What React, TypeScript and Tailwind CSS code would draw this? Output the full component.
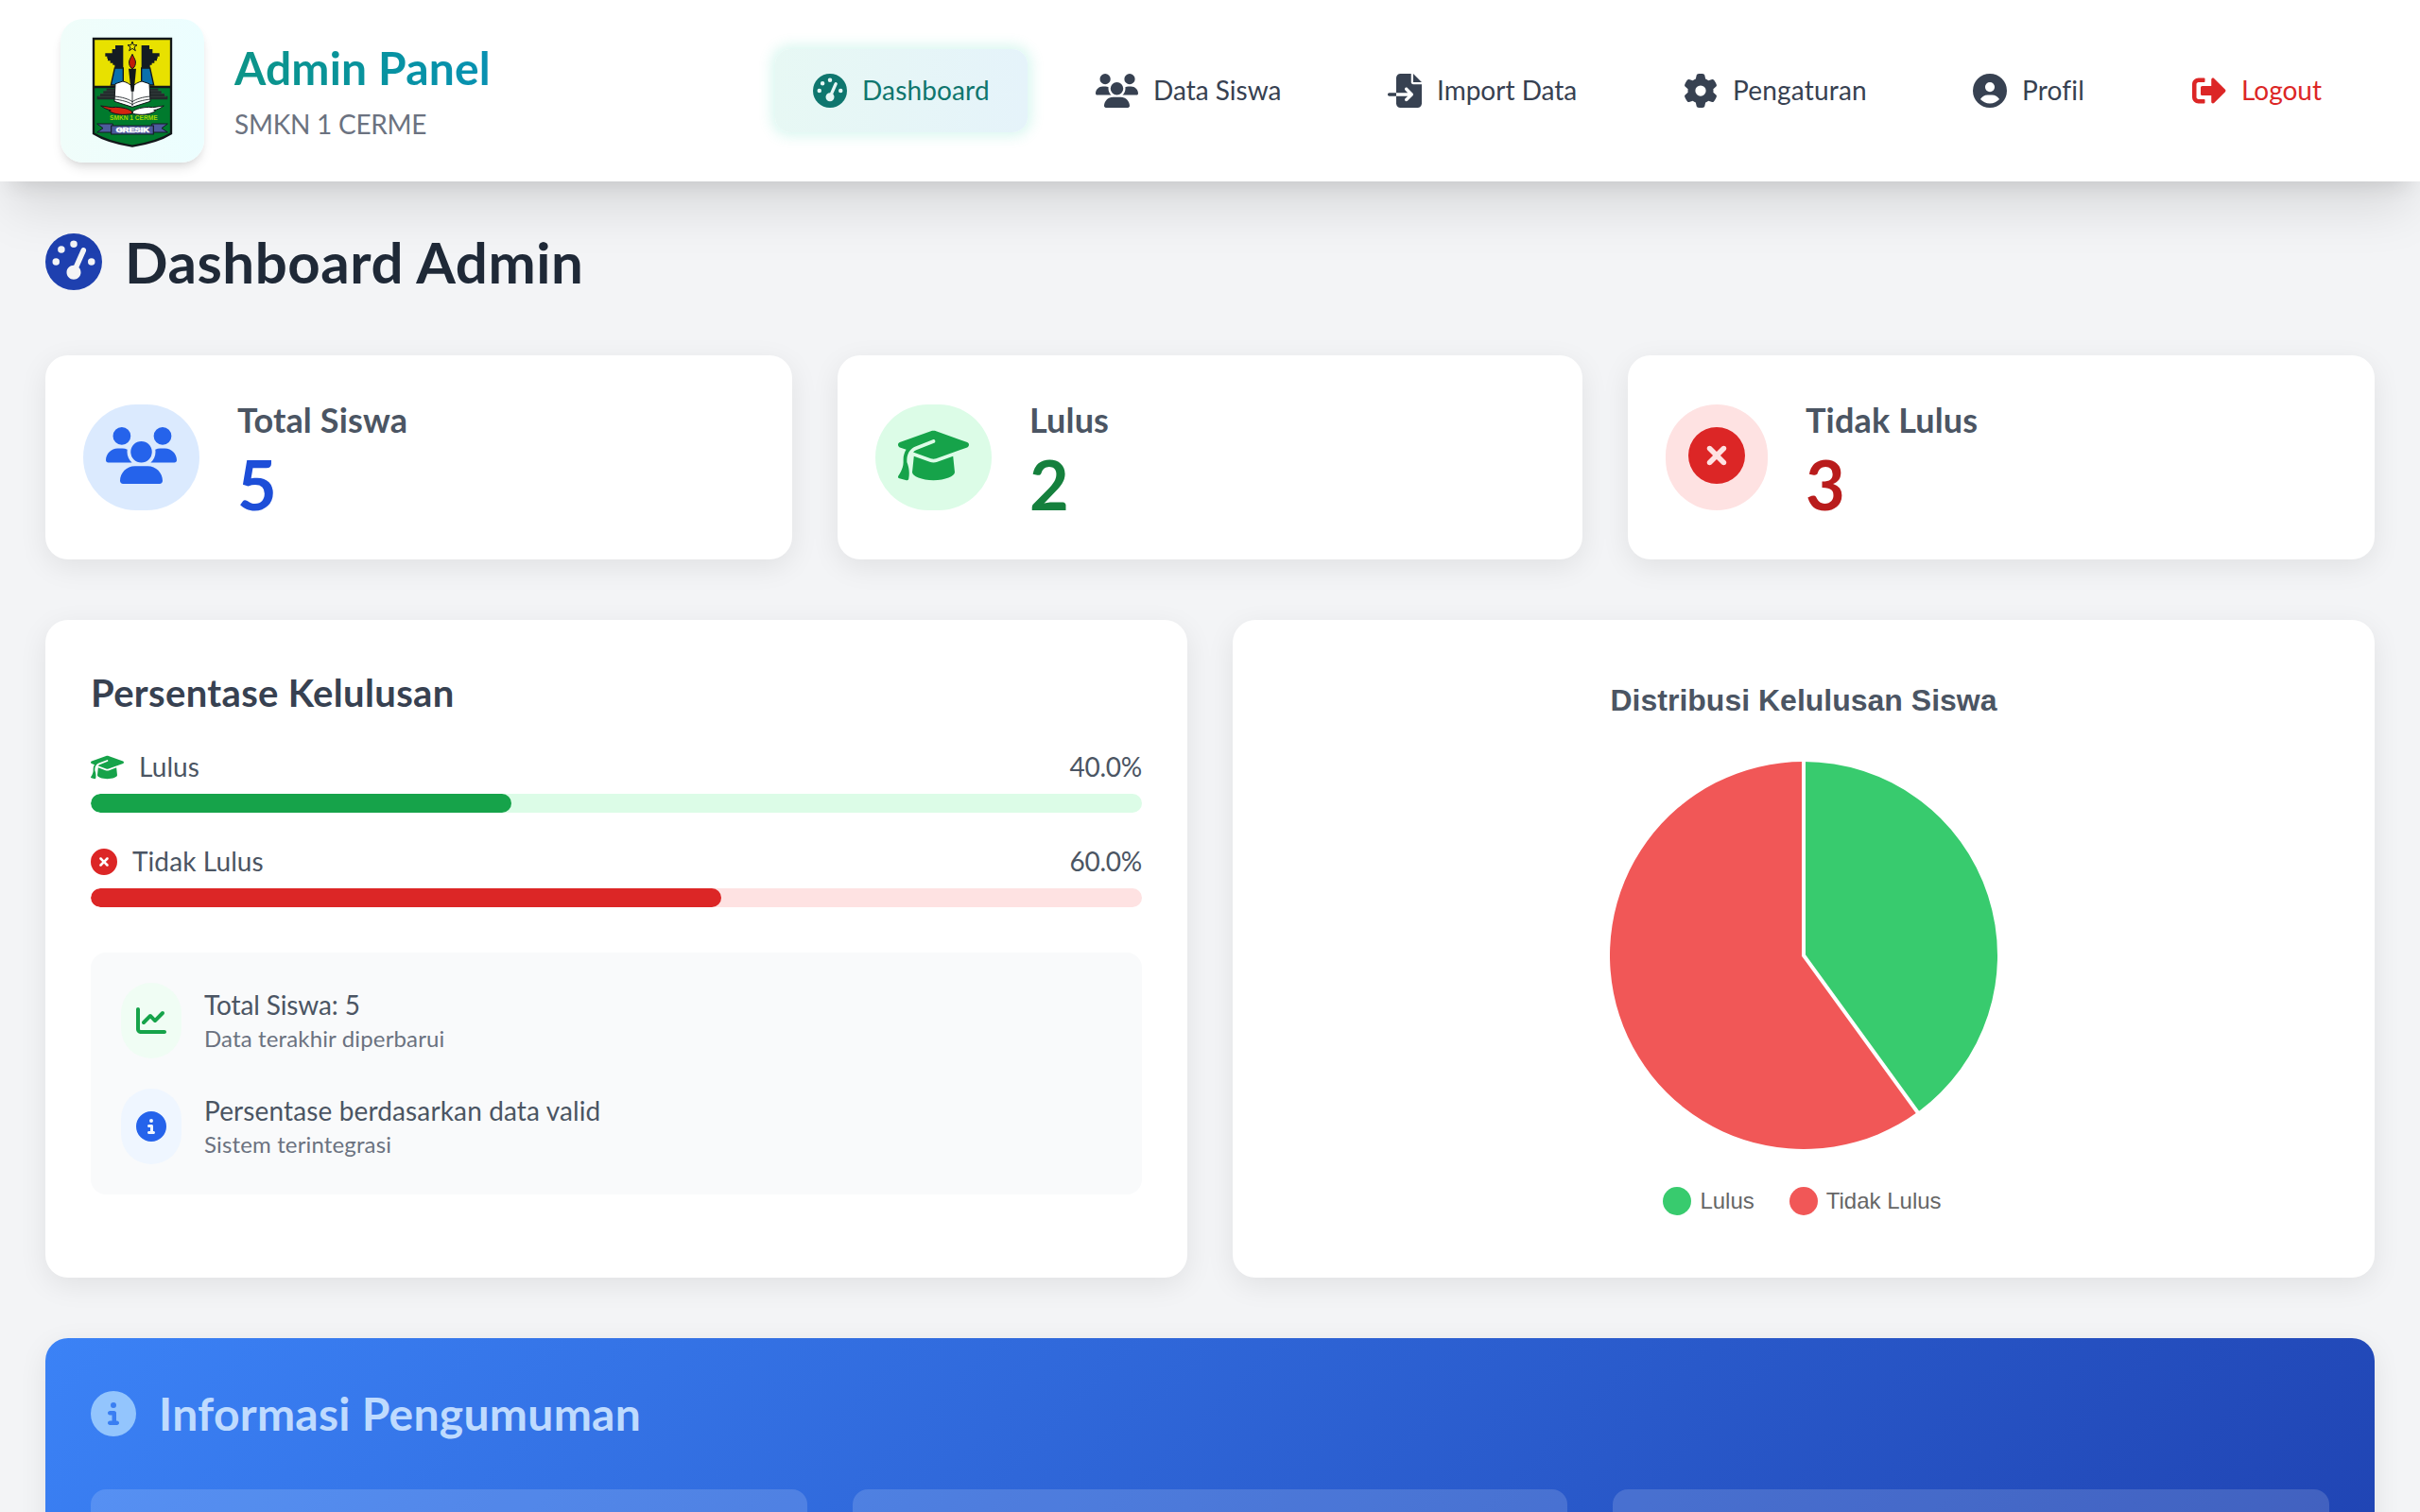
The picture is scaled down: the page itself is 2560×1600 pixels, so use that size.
import type { ReactNode } from "react";
import {
  FaChartLine,
  FaCircleInfo,
  FaCircleUser,
  FaCircleXmark,
  FaFileImport,
  FaGaugeHigh,
  FaGear,
  FaGraduationCap,
  FaUsers,
} from "react-icons/fa6";
import { FaSignOutAlt } from "react-icons/fa";

const CARD = "rounded-3xl bg-white shadow-[0_8px_30px_rgba(0,0,0,0.08)]";

const towerCap =
  "M96 54H121V126H94V116H88V110H80V103H72V96H70V89H64V79H86V66H96Z";

function Emblem() {
  return (
    <svg viewBox="-30 18 360 360" className="size-[120px]">
      <path d="M27 33H273V334C245 352 200 366 150 374C100 366 55 352 27 334Z" fill="#007a2d" />
      <path d="M27 33H273V186H27Z" fill="#e8e100" />
      <path d="M27 186H273" stroke="#12171a" strokeWidth="8" />
      {[undefined, "matrix(-1 0 0 1 300 0)"].map((flip) => (
        <g key={flip ?? "left"} transform={flip}>
          <path d="M94 126H121V180H82Z" fill="#0a70ad" stroke="#12171a" strokeWidth="4" />
          <path d={towerCap} fill="#141c22" />
          <path d="M38 226V215H48V207H58V199H68V191H108L96 226Z" fill="#222a2b" />
          <path d="M48 207H100M58 198H104M42 217H98" stroke="#4a5250" strokeWidth="1.500" />
          <path d="M38 303H88V330H38L57 317Z" fill="#4c5b9c" stroke="#151a26" strokeWidth="3" />
        </g>
      ))}
      <path d="M150 42L154 53L165 53L156 60L160 71L150 64L140 71L144 60L135 53L146 53Z" fill="#e8e100" stroke="#12171a" strokeWidth="3" />
      <path d="M120 168C132 171 143 177 150 186C157 177 168 171 180 168L204 176L207 232L150 250L93 232L96 176Z" fill="#fff" stroke="#12171a" strokeWidth="3" />
      <path d="M94 216C116 218 138 224 150 233C162 224 184 218 206 216M94 225C116 228 138 233 150 242C162 233 184 228 206 225M150 186V246" fill="none" stroke="#12171a" strokeWidth="2.500" />
      <path d="M150 82C156 96 162 101 160 113C158 122 154 126 150 128C146 126 142 122 140 113C138 101 144 96 150 82Z" fill="#c01a08" stroke="#12171a" strokeWidth="3" />
      <path d="M138 128H162L155 200H146Z" fill="#12171a" />
      <path d="M50 246C68 247 80 253 98 250C118 251 138 255 149 264V271C122 277 92 274 76 262L82 260C70 258 60 253 50 246Z" fill="#d42410" stroke="#12171a" strokeWidth="3" />
      <path d="M250 246C232 247 220 253 202 250C182 251 162 255 151 264V271C178 277 208 274 224 262L218 260C230 258 240 253 250 246Z" fill="#fff" stroke="#12171a" strokeWidth="3" />
      <path d="M83 309H217V336H83Z" fill="#4c5b9c" stroke="#151a26" strokeWidth="3.500" />
      <text x="154" y="292" textAnchor="middle" textLength="152" lengthAdjust="spacingAndGlyphs" fontFamily="Liberation Sans" fontSize="19" fontWeight="700" fill="#a4d800">
        SMKN 1 CERME
      </text>
      <text x="151" y="329" textAnchor="middle" textLength="106" lengthAdjust="spacingAndGlyphs" fontFamily="Liberation Sans" fontSize="19" fontWeight="700" fill="#fff" stroke="#fff" strokeWidth="1.500">
        GRESIK
      </text>
      <path d="M27 33H273V334C245 352 200 366 150 374C100 366 55 352 27 334Z" fill="none" stroke="#12171a" strokeWidth="7" />
    </svg>
  );
}

const nav = [
  {
    label: "Dashboard",
    icon: <FaGaugeHigh className="size-9" />,
    tone: "bg-linear-to-r from-[#e7f8f4] to-[#e5f3fa] text-[#0f766e] shadow-[0_0_14px_4px_rgba(45,212,170,0.18)]",
    text: "w-[135px] tracking-[0.15px]",
  },
  { label: "Data Siswa", icon: <FaUsers className="h-9 w-[45px]" />, tone: "text-[#374151]", text: "w-[136px]" },
  { label: "Import Data", icon: <FaFileImport className="size-9" />, tone: "text-[#374151]", text: "w-[149px]" },
  { label: "Pengaturan", icon: <FaGear className="size-9" />, tone: "text-[#374151]", text: "w-[142px] tracking-[0.2px]" },
  { label: "Profil", icon: <FaCircleUser className="size-9" />, tone: "text-[#374151]", text: "w-[68px] tracking-[0.2px]" },
  { label: "Logout", icon: <FaSignOutAlt className="size-9" />, tone: "text-[#dc2626]", text: "w-[85px]" },
];

function Header() {
  return (
    <header className="relative z-10 flex h-48 items-center justify-between bg-white px-16 shadow-[0_40px_50px_-10px_rgba(0,0,0,0.1),0_16px_20px_-12px_rgba(0,0,0,0.1)]">
      <div className="flex items-center gap-8">
        <div className="rounded-3xl bg-linear-to-r from-[#f0fdfa] to-[#ecfeff] p-4 shadow-[0_8px_12px_-2px_rgba(0,0,0,0.1),0_4px_8px_-4px_rgba(0,0,0,0.1)]">
          <Emblem />
        </div>
        <div>
          <h1 className="mb-2 bg-linear-to-r from-[#0d9488] to-[#0891b2] bg-clip-text text-5xl leading-16 font-bold tracking-[0.15px] text-transparent">
            Admin Panel
          </h1>
          <p className="-translate-y-px text-[28px] leading-10 tracking-[-0.25px] text-[#6b7280]">SMKN 1 CERME</p>
        </div>
      </div>
      <nav className="flex gap-8">
        {nav.map(({ label, icon, tone, text }) => (
          <a key={label} className={`flex items-center gap-4 rounded-2xl px-10 py-6 text-[28px] leading-10 whitespace-nowrap ${tone}`}>
            {icon}
            <span className={`-translate-y-px ${text}`}>{label}</span>
          </a>
        ))}
      </nav>
    </header>
  );
}

type StatProps = { label: string; value: number; icon: ReactNode; badge: string; number: string };

function Stat({ label, value, icon, badge, number }: StatProps) {
  return (
    <div className={`flex items-center gap-10 p-10 ${CARD}`}>
      <div className={`flex h-28 items-center rounded-full px-6 pb-[5px] ${badge}`}>{icon}</div>
      <div>
        <h3 className="text-4xl leading-14 font-bold tracking-[0.15px] text-[#4b5563]">{label}</h3>
        <p className={`text-7xl leading-20 font-bold ${number}`}>{value}</p>
      </div>
    </div>
  );
}

type RateProps = { label: string; percent: number; icon: ReactNode; track: string; fill: string };

function Rate({ label, percent, icon, track, fill }: RateProps) {
  return (
    <div>
      <div className="mb-2 flex items-center justify-between text-[28px] leading-10 text-[#4b5563]">
        <div className="flex items-center gap-4">
          {icon}
          <span className="-translate-y-px tracking-[0.1px]">{label}</span>
        </div>
        <span className="-translate-y-px tracking-[-0.25px]">{percent.toFixed(1)}%</span>
      </div>
      <div className={`h-5 overflow-hidden rounded-full ${track}`}>
        <div className={`h-full rounded-full ${fill}`} style={{ width: `${percent}%` }} />
      </div>
    </div>
  );
}

type NoteProps = { icon: ReactNode; badge: string; title: ReactNode; detail: string };

function Note({ icon, badge, title, detail }: NoteProps) {
  return (
    <div className="flex items-center gap-6">
      <div className={`flex h-20 w-16 items-center justify-center rounded-full ${badge}`}>{icon}</div>
      <div className="-translate-y-px">
        <p className="text-[28px] leading-10 text-[#4b5563]">{title}</p>
        <p className="text-2xl leading-8 tracking-[0.14px] text-[#6b7280]">{detail}</p>
      </div>
    </div>
  );
}

function Chart() {
  return (
    <div className={`flex flex-col items-center pt-[65px] font-['Liberation_Sans',Arial,sans-serif] ${CARD}`}>
      <h2 className="text-[32px] leading-10 font-bold text-[#4b5563]">Distribusi Kelulusan Siswa</h2>
      <svg viewBox="-206 -206 412 412" className="mt-11 size-[412px]">
        <path d="M0 0V-205A205 205 0 0 1 120.500 165.850Z" fill="#38cb6e" />
        <path d="M0 0L120.500 165.850A205 205 0 1 1 0 -205Z" fill="#f15757" />
        <path d="M0 -206V0L121.100 166.700" fill="none" stroke="#fff" strokeWidth="4" />
      </svg>
      <div className="mt-[34px] flex items-center gap-[37px] pr-[3px] text-2xl leading-10 text-[#666666]">
        <span className="flex items-center gap-[9px]">
          <i className="size-[30px] rounded-full bg-[#38cb6e]" />
          Lulus
        </span>
        <span className="flex items-center gap-[9px]">
          <i className="size-[30px] rounded-full bg-[#f15757]" />
          Tidak Lulus
        </span>
      </div>
    </div>
  );
}

export default function App() {
  return (
    <div className="h-[1600px] overflow-hidden bg-[#f3f4f6] font-['Lato',sans-serif]">
      <Header />
      <main className="p-12">
        <div className="mb-16 flex items-center gap-6">
          <FaGaugeHigh className="mt-0.5 size-15 text-[#1e40af]" />
          <h1 className="translate-y-px text-6xl leading-18 font-bold tracking-[0.55px] text-[#1f2937]">Dashboard Admin</h1>
        </div>

        <section className="mb-16 grid grid-cols-[790px_788px_790px] gap-12">
          <Stat label="Total Siswa" value={5} icon={<FaUsers className="h-15 w-[75px] text-[#2563eb]" />} badge="bg-[#dbeafe]" number="text-[#1d4ed8]" />
          <Stat label="Lulus" value={2} icon={<FaGraduationCap className="h-15 w-[75px] text-[#16a34a]" />} badge="bg-[#dcfce7]" number="text-[#15803d]" />
          <Stat label="Tidak Lulus" value={3} icon={<FaCircleXmark className="size-15 text-[#dc2626]" />} badge="bg-[#fee2e2]" number="text-[#b91c1c]" />
        </section>

        <section className="mb-16 grid h-[696px] grid-cols-2 gap-12">
          <div className={`p-12 ${CARD}`}>
            <h2 className="mb-8 translate-y-px text-[40px] leading-14 font-bold tracking-[0.34px] text-[#374151]">Persentase Kelulusan</h2>
            <div className="mb-12 flex flex-col gap-8">
              <Rate label="Lulus" percent={40} icon={<FaGraduationCap className="h-7 w-[35px] text-[#16a34a]" />} track="bg-[#dcfce7]" fill="bg-[#16a34a]" />
              <Rate label="Tidak Lulus" percent={60} icon={<FaCircleXmark className="size-7 text-[#dc2626]" />} track="bg-[#fee2e2]" fill="bg-[#dc2626]" />
            </div>
            <div className="flex flex-col gap-8 rounded-2xl bg-[#f9fafb] p-8">
              <Note
                icon={<FaChartLine className="size-8 text-[#16a34a]" />}
                badge="bg-[#f0fdf4]"
                title={<span className="tracking-[-0.12px]">Total Siswa: 5</span>}
                detail="Data terakhir diperbarui"
              />
              <Note
                icon={<FaCircleInfo className="size-8 text-[#2563eb]" />}
                badge="bg-[#eff6ff]"
                title={<span className="tracking-[0.13px]">Persentase berdasarkan data valid</span>}
                detail="Sistem terintegrasi"
              />
            </div>
          </div>
          <Chart />
        </section>

        <section className="h-[400px] rounded-3xl bg-[linear-gradient(135deg,#3b82f6,#1e40af)] p-12 shadow-[0_8px_30px_rgba(0,0,0,0.08)]">
          <div className="mb-12 flex items-center gap-6">
            <FaCircleInfo className="size-12 text-[#93c5fd]" />
            <h2 className="text-5xl leading-16 font-bold tracking-[0.27px] text-[#bfdbfe]">Informasi Pengumuman</h2>
          </div>
          <div className="grid grid-cols-[758px_756px_758px] gap-12">
            <div className="h-48 rounded-2xl bg-white/15" />
            <div className="h-48 rounded-2xl bg-white/15" />
            <div className="h-48 rounded-2xl bg-white/15" />
          </div>
        </section>
      </main>
    </div>
  );
}
